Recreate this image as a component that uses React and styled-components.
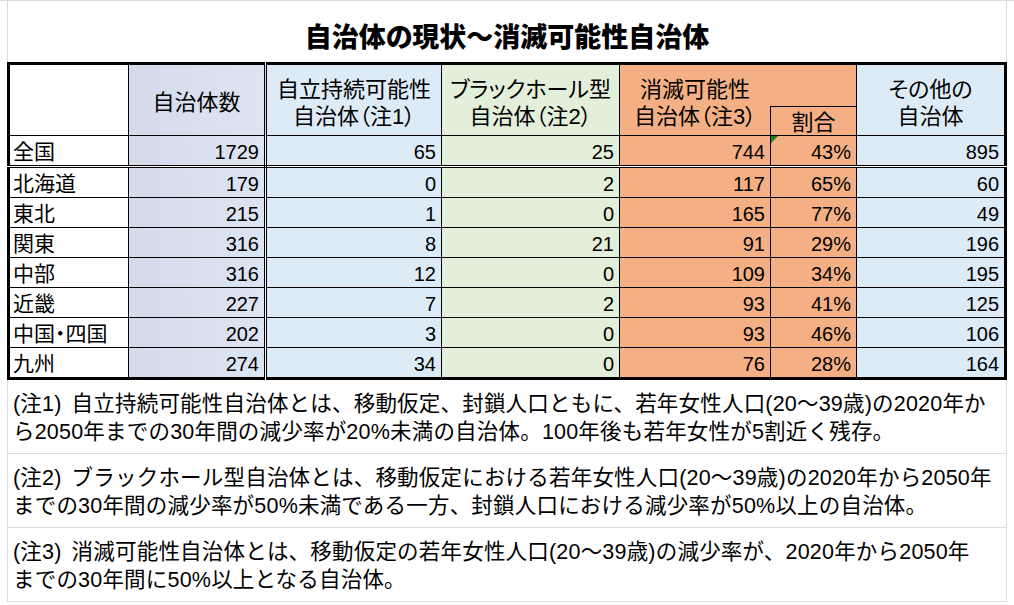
import React from "react";
import styled, { createGlobalStyle } from "styled-components";

const GlobalStyle = createGlobalStyle`
  html, body {
    margin: 0;
    padding: 0;
    background: #fff;
  }
  body {
    font-family: "Liberation Sans", "Noto Sans CJK JP", sans-serif;
    color: #000;
    font-feature-settings: "palt";
  }
`;

const GRID = "#dcdcdc";
const COUNT_BG = "linear-gradient(90deg, #d3daea 0%, #dde4f1 100%)";
const BLUE = "#ddebf7";
const GREEN = "#e2efda";
const ORANGE = "#f4b084";

const Sheet = styled.div`
  width: 1014px;
  height: 605px;
  overflow: hidden;
  box-sizing: border-box;
  padding: 0 7px;
  border-top: 1px solid ${GRID};
`;

const Title = styled.h1`
  margin: 0;
  height: 61px;
  box-sizing: border-box;
  padding-top: 7px;
  display: flex;
  align-items: center;
  justify-content: center;
  border-left: 1px solid ${GRID};
  border-right: 1px solid ${GRID};
  font-family: "Noto Sans CJK JP", sans-serif;
  font-weight: 900;
  font-size: 27px;
  letter-spacing: 0;
`;

const Table = styled.table`
  border-collapse: collapse;
  table-layout: fixed;
  width: 1000px;
  border: 3px solid #000;
`;

const HeadCell = styled.th`
  border: 1px solid #000;
  border-right: ${(p) => (p.$double ? "3px double #000" : "1px solid #000")};
  background: ${(p) => p.$bg};
  padding: 0;
  font-weight: 400;
  font-size: 22px;
  line-height: 27px;
  text-align: center;
  vertical-align: middle;
`;

const HeadText = styled.div`
  padding-top: 5px;
`;

const SplitGrid = styled.div`
  display: grid;
  grid-template-columns: 150px 1fr;
  grid-template-rows: 41px 29px;
`;

const SplitLabel = styled.div`
  grid-column: 1;
  grid-row: 1 / span 2;
  align-self: center;
  padding-top: 5px;
`;

const RatioBox = styled.div`
  grid-column: 2;
  grid-row: 2;
  border-top: 1px solid #000;
  border-left: 1px solid #000;
  display: flex;
  align-items: center;
  justify-content: center;
  padding-top: 2px;
`;

const Cell = styled.td`
  position: relative;
  height: 28px;
  border: 1px solid #000;
  border-right: ${(p) => (p.$double ? "3px double #000" : "1px solid #000")};
  border-bottom: ${(p) => (p.$sep ? "3px double #000" : "1px solid #000")};
  background: ${(p) => p.$bg};
  padding: 0 5px 1px 3px;
  text-align: right;
  vertical-align: bottom;
  font-size: 20px;
  line-height: 24px;

  ${(p) =>
    p.$mark &&
    `
    &::before {
      content: "";
      position: absolute;
      left: 0;
      top: 0;
      border-top: 7px solid #1f7a1f;
      border-right: 7px solid transparent;
    }
  `}
`;

const RegionCell = styled(Cell)`
  text-align: left;
  font-size: 21px;
  padding-left: 3px;
`;

const Note = styled.p`
  margin: 0;
  height: 74px;
  box-sizing: border-box;
  padding: 10px 0 0 5px;
  border-left: 1px solid ${GRID};
  border-right: 1px solid ${GRID};
  border-bottom: 1px solid ${GRID};
  font-family: "Liberation Sans Narrow", "Liberation Sans", "Noto Sans CJK JP", sans-serif;
  font-feature-settings: normal;
  font-size: 21.5px;
  line-height: 28px;
  letter-spacing: 0.2px;
  white-space: nowrap;
`;

const NoteLine = styled.span`
  display: block;
`;

const NoteTag = styled.span`
  margin-right: 10px;
`;

const rows = [
  ["全国", 1729, 65, 25, 744, "43%", 895],
  ["北海道", 179, 0, 2, 117, "65%", 60],
  ["東北", 215, 1, 0, 165, "77%", 49],
  ["関東", 316, 8, 21, 91, "29%", 196],
  ["中部", 316, 12, 0, 109, "34%", 195],
  ["近畿", 227, 7, 2, 93, "41%", 125],
  ["中国・四国", 202, 3, 0, 93, "46%", 106],
  ["九州", 274, 34, 0, 76, "28%", 164],
];

const bodyBgs = [COUNT_BG, BLUE, GREEN, ORANGE, ORANGE, BLUE];

const notes = [
  {
    tag: "(注1)",
    first: "自立持続可能性自治体とは、移動仮定、封鎖人口ともに、若年女性人口(20～39歳)の2020年か",
    second: "ら2050年までの30年間の減少率が20%未満の自治体。100年後も若年女性が5割近く残存。",
  },
  {
    tag: "(注2)",
    first: "ブラックホール型自治体とは、移動仮定における若年女性人口(20～39歳)の2020年から2050年",
    second: "までの30年間の減少率が50%未満である一方、封鎖人口における減少率が50%以上の自治体。",
  },
  {
    tag: "(注3)",
    first: "消滅可能性自治体とは、移動仮定の若年女性人口(20～39歳)の減少率が、2020年から2050年",
    second: "までの30年間に50%以上となる自治体。",
  },
];

export default function App() {
  return (
    <Sheet>
      <GlobalStyle />
      <Title>自治体の現状～消滅可能性自治体</Title>
      <Table>
        <colgroup>
          <col style={{ width: 120 }} />
          <col style={{ width: 137 }} />
          <col style={{ width: 176 }} />
          <col style={{ width: 178 }} />
          <col style={{ width: 151 }} />
          <col style={{ width: 86 }} />
          <col style={{ width: 149 }} />
        </colgroup>
        <thead>
          <tr>
            <HeadCell $bg="#fff" />
            <HeadCell $bg={COUNT_BG} $double>
              <HeadText>自治体数</HeadText>
            </HeadCell>
            <HeadCell $bg={BLUE}>
              <HeadText>
                自立持続可能性
                <br />
                自治体（注1）
              </HeadText>
            </HeadCell>
            <HeadCell $bg={GREEN}>
              <HeadText>
                ブラックホール型
                <br />
                自治体（注2）
              </HeadText>
            </HeadCell>
            <HeadCell $bg={ORANGE} colSpan={2}>
              <SplitGrid>
                <SplitLabel>
                  消滅可能性
                  <br />
                  自治体（注3）
                </SplitLabel>
                <RatioBox>割合</RatioBox>
              </SplitGrid>
            </HeadCell>
            <HeadCell $bg={BLUE}>
              <HeadText>
                その他の
                <br />
                自治体
              </HeadText>
            </HeadCell>
          </tr>
        </thead>
        <tbody>
          {rows.map(([region, ...values], i) => (
            <tr key={region}>
              <RegionCell $bg="#fff" $sep={i === 0}>
                {region}
              </RegionCell>
              {values.map((v, j) => (
                <Cell
                  key={j}
                  $bg={bodyBgs[j]}
                  $double={j === 0}
                  $sep={i === 0}
                  $mark={i === 0 && j === 4}
                >
                  {v}
                </Cell>
              ))}
            </tr>
          ))}
        </tbody>
      </Table>
      {notes.map((n) => (
        <Note key={n.tag}>
          <NoteLine>
            <NoteTag>{n.tag}</NoteTag>
            {n.first}
          </NoteLine>
          <NoteLine>{n.second}</NoteLine>
        </Note>
      ))}
    </Sheet>
  );
}
